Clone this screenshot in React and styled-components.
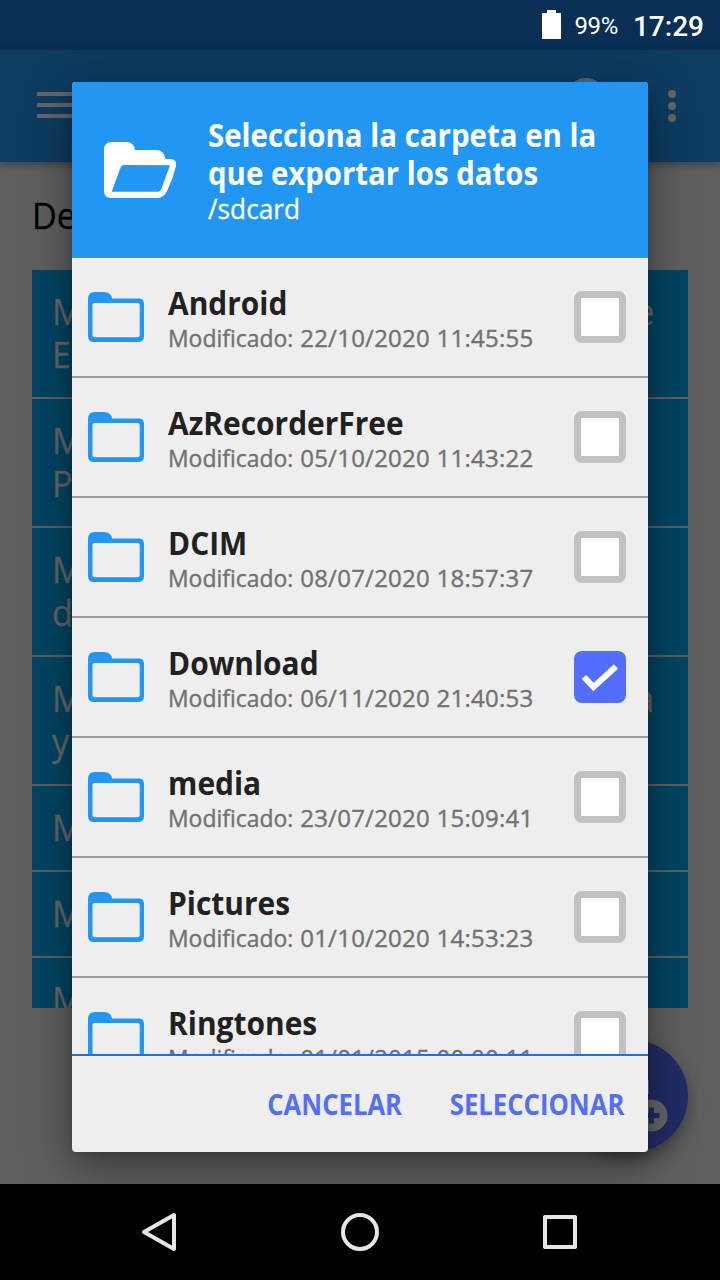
import React from "react";
import styled, { createGlobalStyle } from "styled-components";

const Global = createGlobalStyle`
  * { box-sizing: border-box; }
  body { margin: 0; background: #000; }
`;

const Screen = styled.div`
  position: relative;
  display: flex;
  flex-direction: column;
  width: 720px;
  height: 1280px;
  overflow: hidden;
  background: #5f5f5f;
  font-family: "Open Sans", "Noto Sans", sans-serif;
`;

/* Text set slightly narrower than the family's regular width. */
const Narrow = styled.span`
  display: inline-block;
  white-space: nowrap;
  transform: scaleX(${(p) => p.$by});
  transform-origin: ${(p) => p.$from || "left"} center;
`;

const StatusBar = styled.header`
  display: flex;
  align-items: center;
  justify-content: flex-end;
  flex: none;
  height: 50px;
  padding-right: 16px;
  background: #0a2f54;
  color: #fff;
  font-family: Roboto, sans-serif;
`;

const BatteryIcon = styled.svg`
  margin-bottom: 1px;
`;

const Percent = styled.span`
  margin: 1px 15px 0 13px;
  font-size: 24px;
  letter-spacing: -0.35px;
`;

const Clock = styled.span`
  margin-top: 2px;
  font-size: 28px;
  font-weight: 500;
`;

const AppBar = styled.div`
  display: flex;
  align-items: center;
  flex: none;
  height: 112px;
  padding: 0 44px 0 37px;
  background: #0d3c61;
  box-shadow: 0 3px 8px rgba(0, 0, 0, 0.3);
`;

const MenuGlyph = styled.svg`
  margin-bottom: 2px;
`;

const SearchIcon = styled.svg`
  margin: 0 60px 0 auto;
`;

const Content = styled.main`
  flex: 1;
  min-height: 0;
  padding: 0 32px;
`;

const Heading = styled.div`
  height: 108px;
  padding-top: 31px;
  font-size: 36px;
  line-height: 45px;
  color: #000;
  -webkit-text-stroke: 0.3px;
`;

const DataList = styled.div`
  height: 738px;
  overflow: hidden;
`;

const DataRow = styled.div`
  padding: 20px 34px 21px 20px;
  border-bottom: 2px solid #5f5f5f;
  background: #014462;
  color: #666;
  font-size: 36px;
  line-height: 43px;
  -webkit-text-stroke: 0.3px;
`;

const DataLine = styled.div`
  display: flex;
  justify-content: space-between;
`;

const Fab = styled.div`
  position: absolute;
  right: 32px;
  bottom: 128px;
  width: 112px;
  height: 112px;
  border-radius: 50%;
  background: #212c66;
  box-shadow: 0 8px 16px rgba(0, 0, 0, 0.35);
`;

const NavBar = styled.nav`
  display: flex;
  align-items: center;
  justify-content: space-between;
  flex: none;
  height: 96px;
  padding: 0 140px;
  background: #000;
  z-index: 2;
`;

const Overlay = styled.div`
  position: absolute;
  inset: 50px 0 96px;
  display: flex;
  align-items: center;
  justify-content: center;
`;

const Dialog = styled.section`
  display: flex;
  flex-direction: column;
  width: 576px;
  height: 1070px;
  border-radius: 4px;
  overflow: hidden;
  background: #eee;
  box-shadow: 0 14px 46px rgba(0, 0, 0, 0.42), 0 2px 8px rgba(0, 0, 0, 0.15);
`;

const DialogHeader = styled.div`
  display: flex;
  align-items: center;
  gap: 32px;
  flex: none;
  height: 176px;
  padding: 0 32px;
  background: #2196f3;
  color: #fff;

  svg {
    flex: none;
  }
`;

const Title = styled.h1`
  display: flex;
  flex-direction: column;
  align-items: flex-start;
  margin: 0;
  font-size: 32px;
  font-weight: 700;
  line-height: 38px;
`;

const Path = styled.div`
  font-size: 28px;
  line-height: 33px;
  -webkit-text-stroke: 0.3px;
`;

const FolderList = styled.ul`
  flex: 1;
  min-height: 0;
  margin: 0;
  padding: 0;
  overflow: hidden;
  list-style: none;
`;

const FolderRow = styled.li`
  display: flex;
  align-items: center;
  height: 120px;
  padding: 0 22px 0 16px;
  border-bottom: 2px solid #9e9e9e;
`;

const FolderText = styled.div`
  flex: 1;
  margin-left: 24px;
  padding-top: 1px;
  white-space: nowrap;
`;

const FolderName = styled.div`
  margin-bottom: 1px;
  font-size: 32px;
  font-weight: 700;
  line-height: 38px;
  color: #212121;
`;

const Modified = styled.div`
  display: flex;
  font-size: 24px;
  line-height: 29px;
  color: #727272;
  -webkit-text-stroke: 0.4px;
`;

const Stamp = styled.span`
  margin-left: 1px;
  letter-spacing: 0.25px;
`;

const CheckBox = styled.span`
  display: flex;
  align-items: center;
  justify-content: center;
  width: 52px;
  height: 52px;
  border: ${(p) => (p.$checked ? "0" : "7px solid #c1c1c1")};
  border-radius: 8px;
  background: ${(p) => (p.$checked ? "#536dfe" : "#fff")};
`;

const Actions = styled.footer`
  display: flex;
  align-items: center;
  justify-content: flex-end;
  gap: 32px;
  flex: none;
  height: 98px;
  padding-right: 24px;
  border-top: 2px solid #1976d2;
`;

const Action = styled.button`
  padding: 0;
  border: 0;
  background: none;
  color: #536dfe;
  font: 700 28px "Open Sans", sans-serif;
`;

const folders = [
  ["Android", "22/10/2020 11:45:55"],
  ["AzRecorderFree", "05/10/2020 11:43:22"],
  ["DCIM", "08/07/2020 18:57:37"],
  ["Download", "06/11/2020 21:40:53", true],
  ["media", "23/07/2020 15:09:41"],
  ["Pictures", "01/10/2020 14:53:23"],
  ["Ringtones", "01/01/2015 00:00:11"],
];

const dataRows = [
  [["M", "e"], ["E"]],
  [["M"], ["P"]],
  [["M"], ["d"]],
  [["M", "a"], ["y"]],
  [["M"]],
  [["M"]],
  [["M"]],
];

const FolderIcon = () => (
  <svg width="56" height="50" viewBox="0 0 56 50">
    <path
      fill="#2196f3"
      fillRule="evenodd"
      d="M0 7Q0 0 7 0H16Q23 0 24 6.5H51Q56 6.5 56 12V44Q56 50 50 50H6Q0 50 0 44ZM6.5 11Q4.500 11 4.500 13V43Q4.500 45.200 6.500 45.200H49.500Q51.700 45.200 51.700 43V13Q51.700 11 49.500 11Z"
    />
  </svg>
);

const OpenFolderIcon = () => (
  <svg width="72" height="56" viewBox="0 0 72 56">
    <path
      fill="#fff"
      fillRule="evenodd"
      d="M0 8Q0 0 8 0H22Q30 0 31 8H52Q60 8 61.500 17H66Q73 17 72 24Q69 37 63 49Q60 56 53 56H7Q0 56 0 49ZM20 23Q17.800 23 16.800 25L7.700 49.700H53.500Q56.300 49.700 57.500 46.500L66 23.200Z"
    />
  </svg>
);

export default function App() {
  return (
    <Screen>
      <Global />
      <StatusBar>
        <BatteryIcon width="19" height="29" viewBox="0 0 19 29">
          <path fill="#fff" d="M0 3H5V0H14V3H19V29H0Z" />
        </BatteryIcon>
        <Percent>99%</Percent>
        <Clock>17:29</Clock>
      </StatusBar>
      <AppBar>
        <MenuGlyph width="54" height="26" viewBox="0 0 54 26" fill="#666">
          <path d="M0 0H54V4H0ZM0 11H54V15H0ZM0 22H54V26H0Z" />
        </MenuGlyph>
        <SearchIcon width="44" height="56" viewBox="0 0 44 56">
          <circle cx="22" cy="20" r="18" fill="none" stroke="#666" strokeWidth="4" />
        </SearchIcon>
        <svg width="8" height="32" viewBox="0 0 8 32" fill="#666">
          <circle cx="4" cy="4" r="4" />
          <circle cx="4" cy="16" r="4" />
          <circle cx="4" cy="28" r="4" />
        </svg>
      </AppBar>
      <Content>
        <Heading>
          <Narrow $by={0.95}>De</Narrow>
        </Heading>
        <DataList>
          {dataRows.map((lines, i) => (
            <DataRow key={i}>
              {lines.map((parts, j) => (
                <DataLine key={j}>
                  {parts.map((part, k) => (
                    <Narrow key={part} $by={0.95} $from={k ? "right" : "left"}>
                      {part}
                    </Narrow>
                  ))}
                </DataLine>
              ))}
            </DataRow>
          ))}
        </DataList>
      </Content>
      <Fab>
        <svg width="112" height="112" viewBox="0 0 112 112">
          <path d="M40 40H73V54H40Z" fill="#666" />
          <circle cx="75.500" cy="75.500" r="16" fill="#666" />
          <path d="M75.500 67.500V83.500M67.500 75.500H83.500" stroke="#212c66" strokeWidth="5" />
        </svg>
      </Fab>
      <NavBar>
        <svg width="40" height="40" viewBox="0 0 40 40">
          <path d="M34 3V37L4 20Z" fill="none" stroke="#e6e6e6" strokeWidth="4" strokeLinejoin="round" />
        </svg>
        <svg width="40" height="40" viewBox="0 0 40 40">
          <circle cx="20" cy="20" r="17" fill="none" stroke="#e6e6e6" strokeWidth="4" />
        </svg>
        <svg width="40" height="40" viewBox="0 0 40 40">
          <path d="M5 5H35V35H5Z" fill="none" stroke="#e6e6e6" strokeWidth="4" strokeLinejoin="round" />
        </svg>
      </NavBar>
      <Overlay>
        <Dialog>
          <DialogHeader>
            <OpenFolderIcon />
            <div>
              <Title>
                <Narrow $by={0.92}>Selecciona la carpeta en la</Narrow>
                <Narrow $by={0.918}>que exportar los datos</Narrow>
              </Title>
              <Path>
                <Narrow $by={0.937}>/sdcard</Narrow>
              </Path>
            </div>
          </DialogHeader>
          <FolderList>
            {folders.map(([name, stamp, checked]) => (
              <FolderRow key={name}>
                <FolderIcon />
                <FolderText>
                  <FolderName>
                    <Narrow $by={0.935}>{name}</Narrow>
                  </FolderName>
                  <Modified>
                    <Narrow $by={0.955}>Modificado:</Narrow>
                    <Stamp>{stamp}</Stamp>
                  </Modified>
                </FolderText>
                <CheckBox $checked={checked}>
                  {checked && (
                    <svg width="52" height="52" viewBox="0 0 52 52">
                      <path d="M10 26L19.500 36L42 15.500" fill="none" stroke="#fff" strokeWidth="6" />
                    </svg>
                  )}
                </CheckBox>
              </FolderRow>
            ))}
          </FolderList>
          <Actions>
            <Action>
              <Narrow $by={0.917} $from="right">
                CANCELAR
              </Narrow>
            </Action>
            <Action>
              <Narrow $by={0.917} $from="right">
                SELECCIONAR
              </Narrow>
            </Action>
          </Actions>
        </Dialog>
      </Overlay>
    </Screen>
  );
}
